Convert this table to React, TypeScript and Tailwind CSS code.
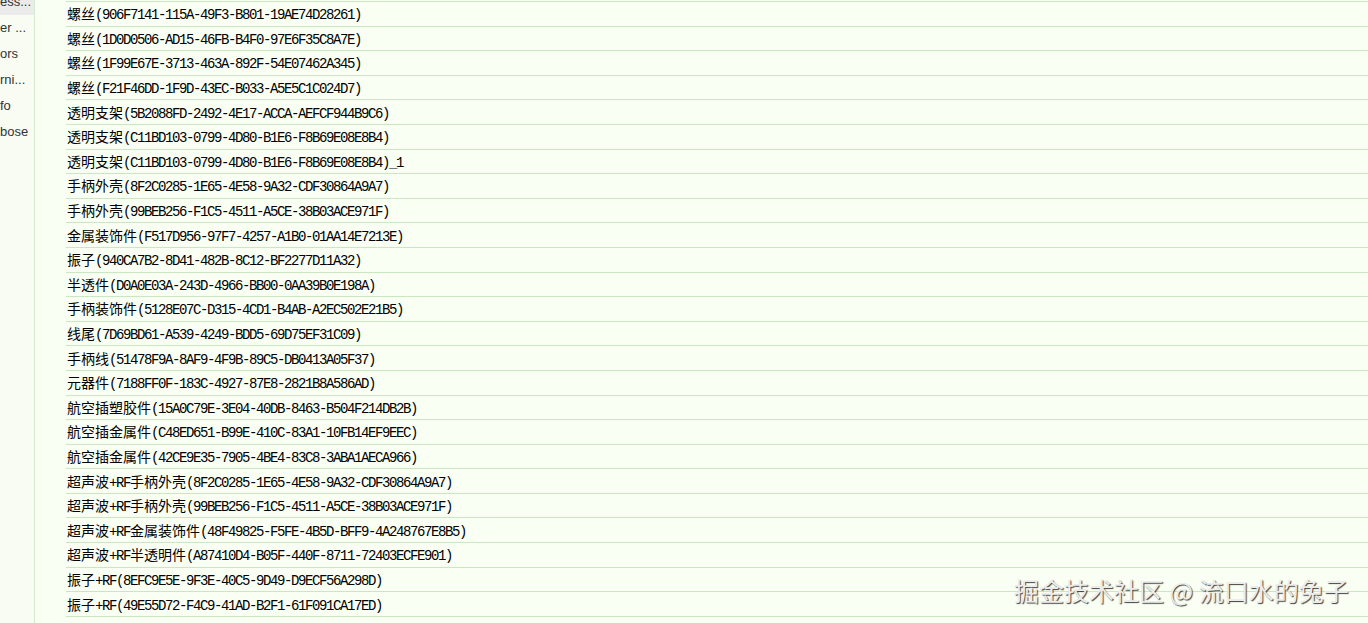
const rows = [
  "螺丝(906F7141-115A-49F3-B801-19AE74D28261)",
  "螺丝(1D0D0506-AD15-46FB-B4F0-97E6F35C8A7E)",
  "螺丝(1F99E67E-3713-463A-892F-54E07462A345)",
  "螺丝(F21F46DD-1F9D-43EC-B033-A5E5C1C024D7)",
  "透明支架(5B2088FD-2492-4E17-ACCA-AEFCF944B9C6)",
  "透明支架(C11BD103-0799-4D80-B1E6-F8B69E08E8B4)",
  "透明支架(C11BD103-0799-4D80-B1E6-F8B69E08E8B4)_1",
  "手柄外壳(8F2C0285-1E65-4E58-9A32-CDF30864A9A7)",
  "手柄外壳(99BEB256-F1C5-4511-A5CE-38B03ACE971F)",
  "金属装饰件(F517D956-97F7-4257-A1B0-01AA14E7213E)",
  "振子(940CA7B2-8D41-482B-8C12-BF2277D11A32)",
  "半透件(D0A0E03A-243D-4966-BB00-0AA39B0E198A)",
  "手柄装饰件(5128E07C-D315-4CD1-B4AB-A2EC502E21B5)",
  "线尾(7D69BD61-A539-4249-BDD5-69D75EF31C09)",
  "手柄线(51478F9A-8AF9-4F9B-89C5-DB0413A05F37)",
  "元器件(7188FF0F-183C-4927-87E8-2821B8A586AD)",
  "航空插塑胶件(15A0C79E-3E04-40DB-8463-B504F214DB2B)",
  "航空插金属件(C48ED651-B99E-410C-83A1-10FB14EF9EEC)",
  "航空插金属件(42CE9E35-7905-4BE4-83C8-3ABA1AECA966)",
  "超声波+RF手柄外壳(8F2C0285-1E65-4E58-9A32-CDF30864A9A7)",
  "超声波+RF手柄外壳(99BEB256-F1C5-4511-A5CE-38B03ACE971F)",
  "超声波+RF金属装饰件(48F49825-F5FE-4B5D-BFF9-4A248767E8B5)",
  "超声波+RF半透明件(A87410D4-B05F-440F-8711-72403ECFE901)",
  "振子+RF(8EFC9E5E-9F3E-40C5-9D49-D9ECF56A298D)",
  "振子+RF(49E55D72-F4C9-41AD-B2F1-61F091CA17ED)",
]

const sideItems = ["ess...", "er ...", "ors", "rni...", "fo", "bose"]

// split into runs of half-width (ascii) and full-width chars
function Line({ text }: { text: string }) {
  const parts = text.match(/[\x00-\x7F]+|[^\x00-\x7F]+/g) ?? []
  return (
    <span className="leading-none">
      {parts.map((p, i) =>
        /^[\x00-\x7F]/.test(p) ? (
          <span key={i} className="font-['Liberation_Mono',monospace] text-[14px] tracking-[-1.4px]">
            {p}
          </span>
        ) : (
          <span key={i} className="font-['Noto_Sans_CJK_SC',sans-serif] text-[14px]">
            {p}
          </span>
        )
      )}
    </span>
  )
}

export default function App() {
  return (
    <div className="relative flex h-[623px] w-[1368px] overflow-hidden bg-[#fafff4] text-black">
      <aside className="w-[35px] shrink-0 overflow-hidden border-r border-[#d3ebcc] bg-[#f8fcf3]">
        <ul className="-mt-[11px] font-['Liberation_Sans',sans-serif] text-[13px] text-[#333]">
          {sideItems.map((s, i) => (
            <li
              key={s}
              className={`flex h-[26px] items-center whitespace-nowrap ${i === 0 ? "h-[24px] bg-[#ebebeb]" : ""}`}
            >
              {s}
            </li>
          ))}
        </ul>
      </aside>
      <main className="flex-1 pl-[31px]">
        <ul className="mt-[1px] border-t border-[#c9e7c1]">
          {rows.map((r, i) => (
            <li
              key={i}
              className="flex h-[24.6px] items-center whitespace-nowrap border-b border-[#c9e7c1] pl-[1px]"
            >
              <Line text={r} />
            </li>
          ))}
        </ul>
      </main>
      <div className="absolute left-[1014px] top-[575px] whitespace-nowrap font-['Noto_Sans_CJK_SC',sans-serif] text-[25px] leading-[30px] text-[#ececec] [text-shadow:1px_1px_1px_rgba(0,0,0,0.75)]">
        掘金技术社区 @ 流口水的兔子
      </div>
    </div>
  )
}
